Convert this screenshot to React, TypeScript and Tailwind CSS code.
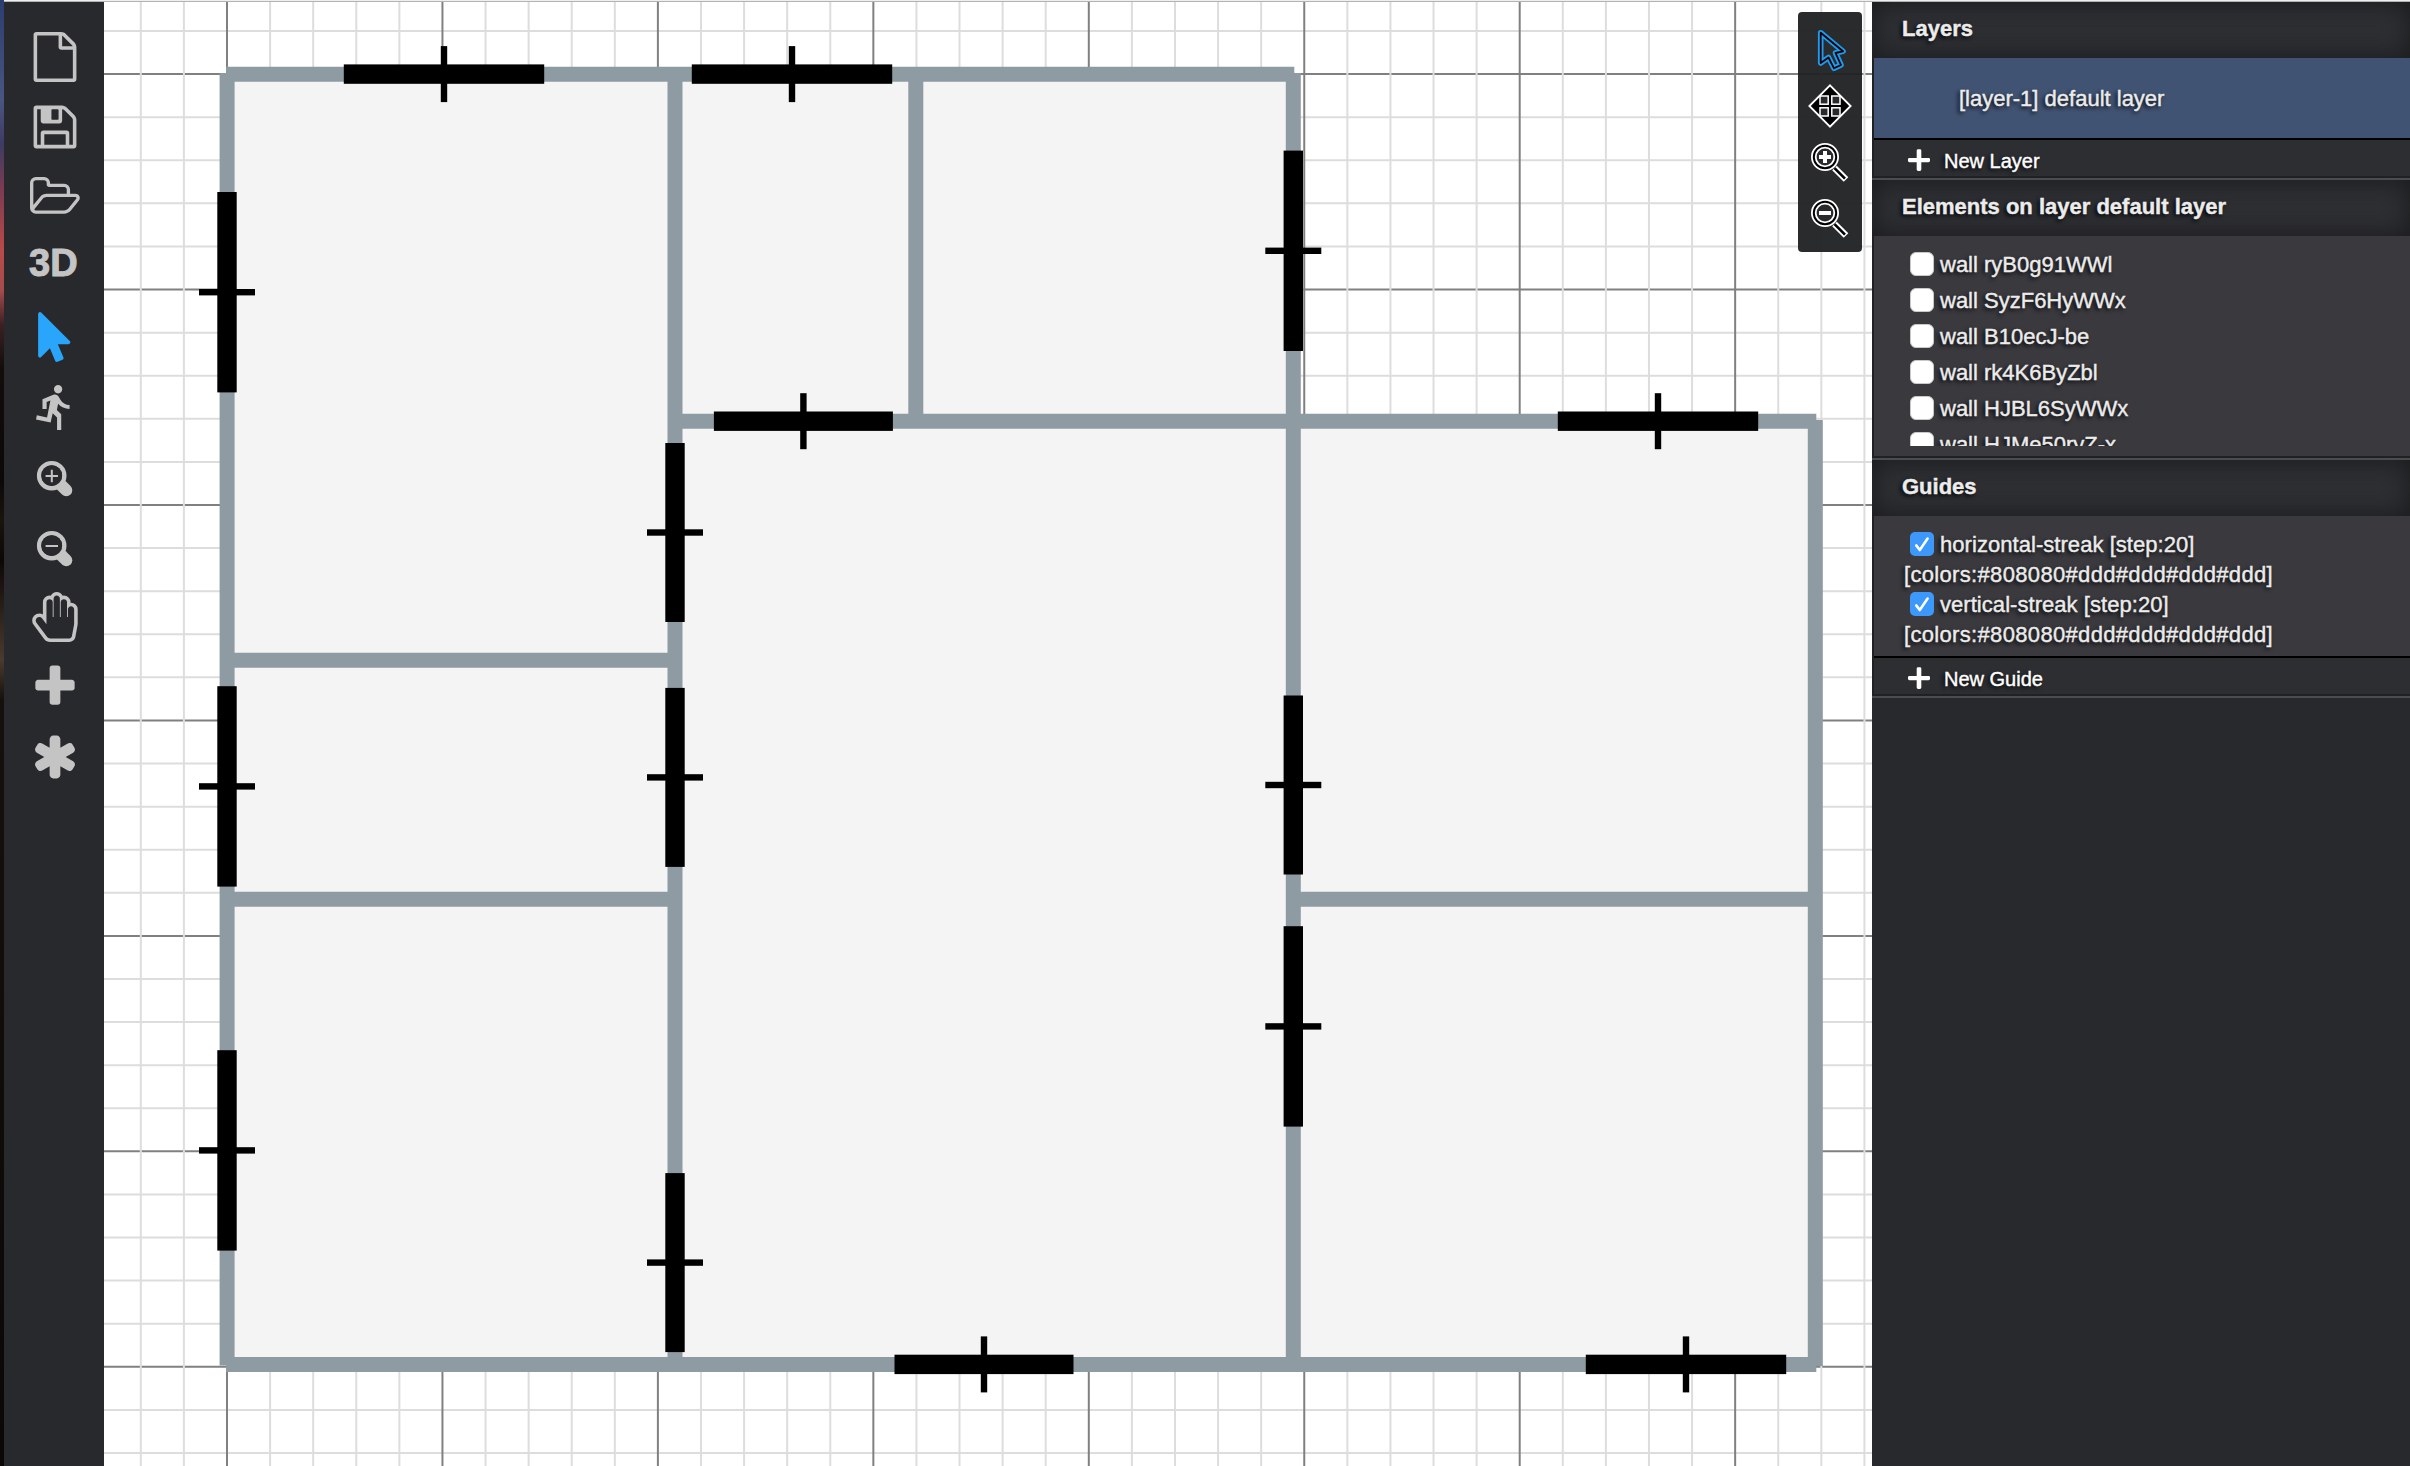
import React from "react";

const STEP = 43.09;
const ORIGIN_X = 227;
const ORIGIN_Y = 74.1;

const verticalLines = Array.from({ length: 41 }, (_, i) => i - 2);
const horizontalLines = Array.from({ length: 34 }, (_, i) => i - 1);

/* Walls: [x1, y1, x2, y2] along the centre line */
const walls: [number, number, number, number][] = [
  [226, 74.2, 1294.3, 74.2],
  [227.1, 72.9, 227.1, 1365.6],
  [675, 73, 675, 1365],
  [915.8, 73, 915.8, 422],
  [1293.3, 72.9, 1293.3, 1365],
  [674, 421.2, 1816.3, 421.2],
  [226, 660.2, 676, 660.2],
  [226, 899.2, 676, 899.2],
  [1292, 899.2, 1816, 899.2],
  [1815.3, 420, 1815.3, 1366],
  [226, 1364.4, 1816.3, 1364.4],
];

/* Openings: centre x, centre y, length, orientation */
const openings: [number, number, number, "h" | "v"][] = [
  [444, 74.1, 200.4, "h"],
  [792, 74.1, 200.4, "h"],
  [803.4, 421.2, 179, "h"],
  [1658, 421.2, 200.4, "h"],
  [984, 1364.4, 179, "h"],
  [1686, 1364.4, 200.4, "h"],
  [227, 292.2, 200.4, "v"],
  [227, 786.4, 200.4, "v"],
  [227, 1150.4, 200.4, "v"],
  [675, 532.5, 179, "v"],
  [675, 777.4, 179, "v"],
  [675, 1262.6, 179, "v"],
  [1293.3, 250.8, 200.4, "v"],
  [1293.3, 785, 179, "v"],
  [1293.3, 1026.4, 200.4, "v"],
];

function FloorPlan() {
  return (
    <svg className="block h-full w-full" viewBox="104 2 1768 1464" preserveAspectRatio="none">
      <rect x="104" y="2" width="1768" height="1464" fill="#fff" />
      {horizontalLines.map((k) => {
        const y = ORIGIN_Y + k * STEP;
        return <line key={k} x1="104" x2="1872" y1={y} y2={y} strokeWidth="2" stroke={k % 5 === 0 ? "#808080" : "#ddd"} />;
      })}
      {verticalLines.map((k) => {
        const x = ORIGIN_X + k * STEP;
        return <line key={k} y1="2" y2="1466" x1={x} x2={x} strokeWidth="2" stroke={k % 5 === 0 ? "#808080" : "#ddd"} />;
      })}
      <path d="M227 74.2H1293.3V421.2H1815.3V1364.4H227Z" fill="#f4f4f4" />
      {walls.map(([x1, y1, x2, y2], i) => (
        <line key={i} x1={x1} y1={y1} x2={x2} y2={y2} stroke="#8e9ba2" strokeWidth="15" />
      ))}
      {openings.map(([x, y, len, dir], i) =>
        dir === "h" ? (
          <g key={i}>
            <rect x={x - len / 2} y={y - 9.7} width={len} height="19.4" />
            <rect x={x - 3.2} y={y - 28} width="6.4" height="56" />
          </g>
        ) : (
          <g key={i}>
            <rect x={x - 9.7} y={y - len / 2} width="19.4" height={len} />
            <rect x={x - 28} y={y - 3.2} width="56" height="6.4" />
          </g>
        ),
      )}
    </svg>
  );
}

function Glyph({ d, box = "0 0 1792 1792", className = "" }: { d: string; box?: string; className?: string }) {
  return (
    <svg className={"h-[50px] w-[50px] shrink-0 fill-current " + className} viewBox={box}>
      <path d={d} />
    </svg>
  );
}

const PLUS =
  "M1600 736v192q0 40-28 68t-68 28h-416v416q0 40-28 68t-68 28h-192q-40 0-68-28t-28-68v-416h-416q-40 0-68-28t-28-68v-192q0-40 28-68t68-28h416v-416q0-40 28-68t68-28h192q40 0 68 28t28 68v416h416q40 0 68 28t28 68z";

function SideZoom({ plus }: { plus?: boolean }) {
  return (
    <svg className="h-[50px] w-[50px] shrink-0" viewBox="0 0 50 50" fill="none" stroke="currentColor">
      <circle cx="21.7" cy="23.7" r="12.6" strokeWidth="4.4" />
      <path d="M31.5 33.5L36.3 38.3" strokeWidth="12" strokeLinecap="round" />
      <circle cx="21.7" cy="23.7" r="10.4" fill="#28292d" stroke="none" />
      <path d={plus ? "M15.6 24H28M21.8 17.8V30.2" : "M15.6 24H28"} strokeWidth="2" />
    </svg>
  );
}

function Sidebar() {
  return (
    <nav className="flex w-[100px] shrink-0 flex-col gap-5 bg-[#28292d] pt-[30px] pl-[26px] text-[#c4c4c4]">
      <Glyph d="M1596 380q28 28 48 76t20 88v1152q0 40-28 68t-68 28h-1344q-40 0-68-28t-28-68v-1600q0-40 28-68t68-28h896q40 0 88 20t76 48zm-444-244v376h376q-10-29-22-41l-313-313q-12-12-41-22zm384 1528v-1024h-416q-40 0-68-28t-28-68v-416h-768v1536h1280z" />
      <Glyph d="M512 1536h768v-384h-768v384zm896 0h128v-896q0-14-10-38.5t-20-34.5l-281-281q-10-10-34-20t-39-10v416q0 40-28 68t-68 28h-576q-40 0-68-28t-28-68v-416h-128v1280h128v-416q0-40 28-68t68-28h832q40 0 68 28t28 68v416zm-384-928v-320q0-13-9.5-22.5t-22.5-9.5h-192q-13 0-22.5 9.5t-9.5 22.5v320q0 13 9.5 22.5t22.5 9.5h192q13 0 22.5-9.5t9.5-22.5zm640 32v928q0 40-28 68t-68 28h-1344q-40 0-68-28t-28-68v-1344q0-40 28-68t68-28h928q40 0 88 20t76 48l280 280q28 28 48 76t20 88z" />
      <Glyph
        box="-64 -64 1917 1917"
        d="M1717 931q0-35-53-35h-1088q-40 0-85.5 21.5t-71.5 52.5l-294 363q-18 24-18 40 0 35 53 35h1088q40 0 86-22t71-53l294-363q18-22 18-39zm-1141-163h768v-160q0-40-28-68t-68-28h-576q-40 0-68-28t-28-68v-64q0-40-28-68t-68-28h-320q-40 0-68 28t-28 68v853l256-315q44-53 116-87.5t140-34.5zm1269 163q0 62-46 120l-295 363q-43 53-116 87.5t-140 34.5h-1088q-92 0-158-66t-66-158v-960q0-92 66-158t158-66h320q92 0 158 66t66 158v32h544q92 0 158 66t66 158v160h192q54 0 99 24.5t67 70.5q15 32 15 68z"
      />
      <div className="-ml-[1px] flex h-[50px] shrink-0 items-center pb-[8px] text-[38px] leading-none font-bold [-webkit-text-stroke:1px_#c4c4c4]">
        3D
      </div>
      <Glyph
        className="ml-[1px] text-[#29a5fb]"
        d="M1389 1043q31 30 14 69-17 40-59 40h-382l201 476q10 25 0 49t-34 35l-177 75q-25 10-49 0t-35-34l-191-452-312 312q-19 19-45 19-12 0-24-5-40-17-40-59v-1504q0-42 40-59 12-5 24-5 27 0 45 19z"
      />
      <Glyph
        box="0 0 24 24"
        d="M13.49 5.48c1.1 0 2-.9 2-2s-.9-2-2-2-2 .9-2 2 .9 2 2 2zm-3.6 13.9l1-4.4 2.1 2v6h2v-7.5l-2.1-2 .6-3c1.3 1.5 3.3 2.5 5.5 2.5v-2c-1.9 0-3.5-1-4.3-2.4l-1-1.6c-.4-.6-1-1-1.7-1-.3 0-.5.1-.8.1l-5.2 2.2v4.7h2v-3.4l1.8-.7-1.6 8.1-4.9-1-.4 2 7 1.4z"
      />
      <SideZoom plus />
      <SideZoom />
      <Glyph
        box="-78 -128 1792 1792"
        d="M880 0q-46 0-79 33t-33 79v656h-32v-528q0-46-33-79t-79-33-79 33-33 79v528 256l-154-205q-38-51-102-51-53 0-90.5 37.5t-37.5 90.5q0 43 26 77l384 512q38 51 102 51h688q34 0 61-22t34-56l76-405q5-32 5-59v-498q0-46-33-79t-79-33-79 33-33 79v272h-32v-528q0-46-33-79t-79-33-79 33-33 79v528h-32v-656q0-46-33-79t-79-33zm0-128q68 0 125.5 35.5t88.5 96.5q19-4 42-4 99 0 169.5 70.5t70.5 169.5v17q105-6 180.5 64t75.5 175v498q0 40-8 83l-76 404q-14 79-76.5 131t-143.5 52h-688q-60 0-114.5-27.5t-90.5-74.5l-384-512q-51-68-51-154 0-106 75-181t181-75q78 0 128 34v-434q0-99 70.5-169.5t169.5-70.5q23 0 42 4 31-61 88.5-96.5t125.5-35.5z"
      />
      <Glyph d={PLUS} />
      <Glyph d="M1546 1050q46 26 59.5 77.5t-12.5 97.5l-64 110q-26 46-77.5 59.5t-97.5-12.5l-266-153v307q0 52-38 90t-90 38h-128q-52 0-90-38t-38-90v-307l-266 153q-46 26-97.5 12.5t-77.5-59.5l-64-110q-26-46-12.5-97.5t59.5-77.5l266-154-266-154q-46-26-59.5-77.5t12.5-97.5l64-110q26-46 77.5-59.5t97.5 12.5l266 153v-307q0-52 38-90t90-38h128q52 0 90 38t38 90v307l266-153q46-26 97.5-12.5t77.5 59.5l64 110q26 46 12.5 97.5t-59.5 77.5l-266 154z" />
    </nav>
  );
}

function ToolZoom({ plus }: { plus?: boolean }) {
  return (
    <svg className="h-14 w-12" viewBox="0 0 48 56" fill="none">
      <path d="M28.5 34L40 45.5" stroke="#fff" strokeWidth="6.6" />
      <circle cx="19" cy="23" r="11.2" stroke="#fff" strokeWidth="5.6" />
      <circle cx="19" cy="23" r="11.2" stroke="#000" strokeWidth="2" />
      <path d="M28.5 34.2L39 44.6" stroke="#000" strokeWidth="2.6" />
      <path d={plus ? "M13 23H25M19 17V29" : "M13 23H25"} stroke="#fff" strokeWidth="4" />
    </svg>
  );
}

function CanvasTools() {
  const arrow = "M14.7 10.7L37 29.3L29.5 31L35 43L28 46.3L22.5 35.5L14.7 41Z";
  return (
    <div className="absolute top-[10px] right-[10px] flex h-60 w-16 flex-col items-center rounded bg-[#1f2022]/95 pt-[10px]">
      <svg className="h-14 w-12" viewBox="0 0 48 56" fill="none" strokeLinejoin="round">
        <path d={arrow} stroke="#1c9bf0" strokeWidth="5.6" />
        <path d={arrow} stroke="#000" strokeWidth="1.8" />
      </svg>
      <svg className="h-14 w-12" viewBox="0 0 48 56">
        <path d="M24 7.4L44.6 28L24 48.6L3.4 28Z" fill="#000" stroke="#fff" strokeWidth="1.9" />
        <g fill="#28292b" stroke="#fff" strokeWidth="1.5">
          <rect x="14" y="18" width="8.2" height="8.2" />
          <rect x="25.8" y="18" width="8.2" height="8.2" />
          <rect x="14" y="29.8" width="8.2" height="8.2" />
          <rect x="25.8" y="29.8" width="8.2" height="8.2" />
        </g>
      </svg>
      <ToolZoom plus />
      <ToolZoom />
    </div>
  );
}

function PanelHeader({ children }: { children: React.ReactNode }) {
  return (
    <h3 className="-ml-[2px] flex h-14 items-center bg-[#2e2f33] pb-[2px] pl-[30px] text-[22px] leading-none font-bold text-[#ececec] shadow-[inset_0_0_24px_2px_#1b1c1e] [text-shadow:-2px_2px_4px_#000]">
      {children}
    </h3>
  );
}

function AddRow({ children }: { children: React.ReactNode }) {
  return (
    <div className="flex h-[38px] items-center border-t-2 border-black bg-[#2d2e32] pt-[6px] pl-[32px] text-[20px] leading-none text-white [-webkit-text-stroke:0.4px_#fff] [text-shadow:-2px_2px_4px_#000]">
      <svg className="mr-[12px] h-[26px] w-[26px] fill-current" viewBox="0 0 1792 1792">
        <path d="M1600 780v104q0 44-44 44h-556v556q0 44-44 44h-120q-44 0-44-44v-556h-556q-44 0-44-44v-104q0-44 44-44h556v-556q0-44 44-44h120q44 0 44 44v556h556q44 0 44 44z" stroke="#fff" strokeWidth="110" />
      </svg>
      {children}
    </div>
  );
}

function Checkbox({ checked }: { checked?: boolean }) {
  return checked ? (
    <span className="mr-[6px] ml-[6px] h-6 w-6 shrink-0 rounded-[5px] bg-[#3d98fb]">
      <svg viewBox="0 0 24 24" className="h-6 w-6" fill="none" stroke="#fff" strokeWidth="2.6" strokeLinecap="round" strokeLinejoin="round">
        <path d="M6.2 13.4L9.8 18L17.6 6.6" />
      </svg>
    </span>
  ) : (
    <span className="mr-[6px] ml-[6px] h-6 w-6 shrink-0 rounded-[6px] border border-[#c9c9c9] bg-white" />
  );
}

const elements = ["ryB0g91WWl", "SyzF6HyWWx", "B10ecJ-be", "rk4K6ByZbl", "HJBL6SyWWx", "HJMe50ryZ-x"];
const guides = ["horizontal-streak", "vertical-streak"];

function Section({ title, children }: { title: string; children: React.ReactNode }) {
  return (
    <section className="border-b-2 border-[#4b4b50]">
      <div className="border-b-2 border-l-2 border-[#202123]">
        <PanelHeader>{title}</PanelHeader>
        {children}
      </div>
    </section>
  );
}

function Panel() {
  return (
    <aside className="w-[538px] shrink-0 bg-[#28292d] text-[22px] text-[#ececec] [-webkit-text-stroke:0.4px_#ececec] [&_li]:[text-shadow:-2px_2px_4px_#000]">
      <Section title="Layers">
        <div className="flex h-20 items-center bg-[#415373] pt-[2px] pl-[85px] leading-none [text-shadow:-2px_2px_4px_#000]">
          [layer-1] default layer
        </div>
        <AddRow>New Layer</AddRow>
      </Section>
      <Section title="Elements on layer default layer">
        <div className="h-[220px] bg-[#3a393e] pt-[10px] pb-[10px] pl-[30px]">
          <ul className="h-[200px] overflow-hidden">
            {elements.map((id) => (
              <li key={id} className="flex h-9 items-center leading-none whitespace-nowrap">
                <Checkbox />
                <span className="pt-[2px]">wall {id}</span>
              </li>
            ))}
          </ul>
        </div>
      </Section>
      <Section title="Guides">
        <ul className="h-[140px] bg-[#3a393e] pt-[13px] pl-[30px]">
          {guides.map((name) => (
            <li key={name} className="whitespace-nowrap">
              <div className="flex h-[30px] items-center leading-none">
                <Checkbox checked />
                <span className="pt-[2px] tracking-[0.05px]">{name} [step:20]</span>
              </div>
              <div className="flex h-[30px] items-center pt-[2px] leading-none tracking-[0.33px]">[colors:#808080#ddd#ddd#ddd#ddd]</div>
            </li>
          ))}
        </ul>
        <AddRow>New Guide</AddRow>
      </Section>
    </aside>
  );
}

export default function App() {
  return (
    <div className="flex h-[1466px] w-[2410px] overflow-hidden bg-[#28292d] font-['Liberation_Sans',Arial,sans-serif]">
      <div className="w-1 shrink-0 bg-[linear-gradient(180deg,#2c3d70_0px,#4a5582_100px,#3f3b63_145px,#7d3b52_190px,#b94a48_250px,#a54c4f_290px,#3b2023_325px,#120c0b_370px,#0d0808_480px,#1a140c_520px,#0c0706_560px,#4a3a30_660px,#16100d_700px,#0a0706_100%)]" />
      <div className="flex min-w-0 flex-1 flex-col">
        <div className="h-[2px] shrink-0 border-b border-[#b2b4b3] bg-[#eef0ef]" />
        <div className="flex min-h-0 flex-1">
          <Sidebar />
          <main className="relative min-w-0 flex-1">
            <FloorPlan />
            <CanvasTools />
          </main>
          <Panel />
        </div>
      </div>
    </div>
  );
}
